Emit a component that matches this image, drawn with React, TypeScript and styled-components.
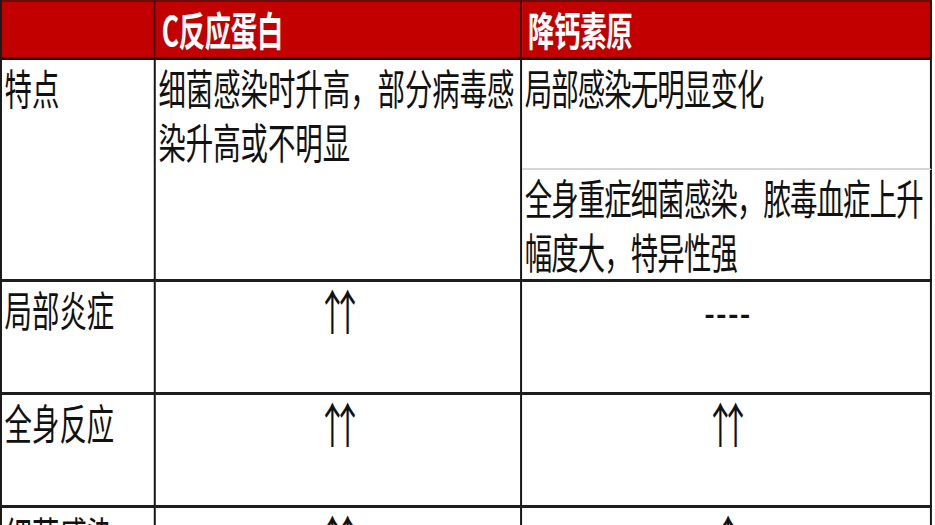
import React from "react";
import styled, { createGlobalStyle } from "styled-components";

const GlobalStyle = createGlobalStyle`
  html, body {
    margin: 0;
    padding: 0;
    background: #ffffff;
    overflow: hidden;
  }
`;

// the source slide is squeezed horizontally, so the table is laid out wide and scaled on x
const Table = styled.div`
  box-sizing: border-box;
  display: grid;
  grid-template-columns: 233px 555px 621px;
  grid-template-rows: 60px 110px 112px 113px 113px 80px;
  width: 1412px;
  border-left: 3px solid #1a1a1a;
  transform: scaleX(0.66);
  transform-origin: left top;
  font-family: "Noto Sans CJK SC", "Noto Sans", sans-serif;
  color: #111111;
`;

const HeadCell = styled.div`
  box-sizing: border-box;
  display: flex;
  align-items: center;
  padding: 0 0 2px 9px;
  background: #c20000;
  border-top: 2px solid #6a0c0c;
  border-bottom: 3px solid #2c0808;
  border-right: 3px solid #3a0a0a;
  color: #ffffff;
  font-size: 40px;
  font-weight: 700;
  letter-spacing: -0.5px;
`;

const Cell = styled.div<{ $span?: number; $center?: boolean; $tight?: boolean; $soft?: boolean }>`
  box-sizing: border-box;
  grid-row: ${(p) => (p.$span ? `span ${p.$span}` : "auto")};
  padding: 0 4px 0 4px;
  border-right: 3px solid #151515;
  border-bottom: ${(p) => (p.$soft ? "2px solid #d6d6d6" : "3px solid #1e1e1e")};
  font-size: 41.5px;
  line-height: 54px;
  letter-spacing: ${(p) => (p.$tight ? "-1.3px" : "0")};
  text-align: ${(p) => (p.$center ? "center" : "left")};
`;

// full-width arrows pulled together; margin-right re-centres the ink
const Arrows = styled.span`
  font-family: "Noto Sans CJK SC", sans-serif;
  font-size: 48px;
  letter-spacing: -25px;
  margin-right: 25px;
  margin-left: 6px;
`;

const Dashes = styled.span`
  font-family: "Noto Sans CJK SC", sans-serif;
  font-size: 46px;
  letter-spacing: 2px;
  margin-left: 6px;
`;

export default function App() {
  return (
    <>
      <GlobalStyle />
      <Table>
        <HeadCell />
        <HeadCell>C反应蛋白</HeadCell>
        <HeadCell>降钙素原</HeadCell>

        <Cell $span={2}>特点</Cell>
        <Cell $span={2}>细菌感染时升高，部分病毒感染升高或不明显</Cell>
        <Cell $tight $soft>局部感染无明显变化</Cell>
        <Cell $tight>全身重症细菌感染，脓毒血症上升幅度大，特异性强</Cell>

        <Cell>局部炎症</Cell>
        <Cell $center><Arrows>↑↑</Arrows></Cell>
        <Cell $center><Dashes>----</Dashes></Cell>

        <Cell>全身反应</Cell>
        <Cell $center><Arrows>↑↑</Arrows></Cell>
        <Cell $center><Arrows>↑↑</Arrows></Cell>

        <Cell>细菌感染</Cell>
        <Cell $center><Arrows>↑↑</Arrows></Cell>
        <Cell $center><Arrows>↑</Arrows></Cell>
      </Table>
    </>
  );
}
